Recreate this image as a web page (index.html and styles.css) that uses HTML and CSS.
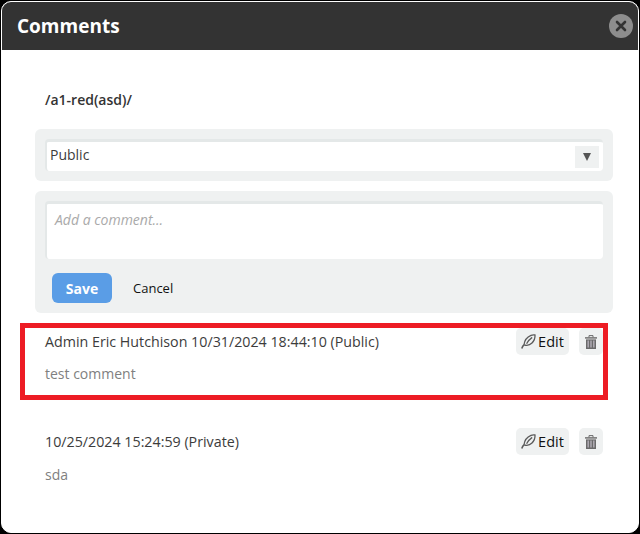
FILE: index.html
```html
<!DOCTYPE html>
<html lang="en">
<head>
<meta charset="utf-8">
<title>Comments</title>
<link rel="stylesheet" href="styles.css">
</head>
<body>
<div class="dialog">
  <header class="dialog-head">
    <h1 class="dialog-title">Comments</h1>
    <button class="close" aria-label="Close">
      <svg width="12" height="12" viewBox="0 0 12 12"><path d="M2 2l8 8M10 2l-8 8" stroke="#333" stroke-width="2.6" stroke-linecap="round" fill="none"/></svg>
    </button>
  </header>
  <main class="dialog-body">
    <div class="path">/a1-red(asd)/</div>
    <div class="panel">
      <div class="field select">
        <span class="select-value">Public</span>
        <span class="select-arrow"><svg width="8" height="8" viewBox="0 0 8 8"><path d="M0 0h8L4 8z" fill="#555"/></svg></span>
      </div>
    </div>
    <div class="panel">
      <div class="field textarea">Add a comment...</div>
      <div class="actions">
        <button class="save">Save</button>
        <button class="cancel">Cancel</button>
      </div>
    </div>
    <section class="comment comment-first">
      <div class="comment-head">
        <span class="meta">Admin Eric Hutchison 10/31/2024 18:44:10 (Public)</span>
        <button class="tool edit">
          <svg width="15" height="15" viewBox="0 0 15 15"><path d="M.8 14.4C1.4 12.6 2 11.6 3 10.8" stroke="#5c5c5c" stroke-width="1.6" fill="none"/><path d="M3 10.8C3.4 7 6.2 3 10 1.4c1.2-.5 2.4-.6 4-.4.2 3-1 6-3 8-2.200 2.200-5 2.800-8 1.800z" stroke="#5c5c5c" stroke-width="1.300" fill="none"/><path d="M5.600 9.800C6.800 7.400 8.600 5.200 11.200 3.400" stroke="#5c5c5c" stroke-width="1.300" fill="none"/></svg>
          <span>Edit</span>
        </button>
        <button class="tool trash" aria-label="Delete">
          <svg width="12" height="14" viewBox="0 0 12 14"><path d="M0 2.200h12v1.400H0z" fill="#6a6a6a"/><path d="M4 2.200V.6h4v1.600" stroke="#6a6a6a" stroke-width="1" fill="none"/><path d="M1 4.400h10V14H1z" fill="#6a6a6a"/><path d="M3.200 5.600v7M6 5.600v7M8.800 5.600v7" stroke="#b4afb8" stroke-width="1.400"/></svg>
        </button>
      </div>
      <p class="comment-text">test comment</p>
    </section>
    <section class="comment">
      <div class="comment-head">
        <span class="meta">10/25/2024 15:24:59 (Private)</span>
        <button class="tool edit">
          <svg width="15" height="15" viewBox="0 0 15 15"><path d="M.8 14.4C1.4 12.6 2 11.6 3 10.8" stroke="#5c5c5c" stroke-width="1.6" fill="none"/><path d="M3 10.8C3.4 7 6.2 3 10 1.4c1.2-.5 2.4-.6 4-.4.2 3-1 6-3 8-2.200 2.200-5 2.800-8 1.800z" stroke="#5c5c5c" stroke-width="1.300" fill="none"/><path d="M5.600 9.800C6.800 7.400 8.600 5.200 11.200 3.400" stroke="#5c5c5c" stroke-width="1.300" fill="none"/></svg>
          <span>Edit</span>
        </button>
        <button class="tool trash" aria-label="Delete">
          <svg width="12" height="14" viewBox="0 0 12 14"><path d="M0 2.200h12v1.400H0z" fill="#6a6a6a"/><path d="M4 2.200V.6h4v1.600" stroke="#6a6a6a" stroke-width="1" fill="none"/><path d="M1 4.400h10V14H1z" fill="#6a6a6a"/><path d="M3.200 5.600v7M6 5.600v7M8.800 5.600v7" stroke="#b4afb8" stroke-width="1.400"/></svg>
        </button>
      </div>
      <p class="comment-text">sda</p>
    </section>
  </main>
</div>
<div class="highlight"></div>
</body>
</html>
```
FILE: styles.css
```css
* { box-sizing: border-box; }
html, body { margin: 0; height: 534px; overflow: hidden; }
body {
  background: #000;
  font-family: "Open Sans", sans-serif;
  padding: 1px;
  position: relative;
}
button { font-family: inherit; border: 0; padding: 0; cursor: pointer; }
.dialog {
  width: 638px;
  height: 532px;
  background: #fff;
  border: 1px solid #fff;
  border-radius: 10px;
  overflow: hidden;
}
.dialog-head {
  height: 48px;
  background: #333;
  display: flex;
  align-items: center;
  justify-content: space-between;
  padding: 0 5px 1px 15px;
}
.dialog-title { margin: 0; color: #fff; font-size: 19px; font-weight: 700; line-height: 46px; }
.close {
  width: 24px; height: 24px; border-radius: 50%;
  background: #8d8d8d;
  display: flex; align-items: center; justify-content: center;
}
.dialog-body { padding: 40px 25px 0 33px; }
.path { font-size: 14px; font-weight: 600; color: #333; line-height: 20px; padding-left: 10px; margin-bottom: 19px; }
.panel { background: #eff1f1; border-radius: 6px; padding: 10px; margin-bottom: 10px; }
.field {
  background: #fff;
  border-top: 3px solid #e4e8e8;
  border-left: 2px solid #e4e8e8;
  border-radius: 4px;
}
.select { height: 32px; display: flex; align-items: center; justify-content: space-between; padding: 0 4px 0 3px; }
.select-value { font-size: 14px; color: #3c3c3c; margin-bottom: 5px; }
.select-arrow {
  width: 24px; height: 22px; background: #eff1f1;
  display: flex; align-items: center; justify-content: center;
}
.textarea { height: 58px; font-size: 14px; font-style: italic; color: #aaa; padding: 6px 8px; line-height: 20px; }
.actions { display: flex; align-items: center; margin-top: 14px; padding-left: 7px; }
.save {
  width: 60px; height: 30px; border-radius: 6px;
  background: #5a9de6; color: #fff; font-size: 14px; font-weight: 700;
}
.cancel { background: none; color: #111; font-size: 13px; font-weight: 500; margin-left: 21px; }
.comment { padding: 0 10px; }
.comment-first { margin-top: 15px; }
.comment + .comment { margin-top: 45px; }
.comment-head { display: flex; align-items: center; height: 27px; }
.meta { flex: 1; font-size: 14.25px; color: #3c3c3c; }
.tool {
  height: 27px; background: #eff1f1; border-radius: 5px;
  display: flex; align-items: center; justify-content: center;
}
.edit { width: 53px; gap: 2px; font-size: 14.5px; color: #111; margin-right: 10px; }
.trash { width: 24px; }
.comment-text { margin: 10px 0 0; font-size: 14px; line-height: 18px; color: #808080; }
.comment + .comment .comment-text { margin-top: 11px; }
.highlight {
  position: absolute;
  left: 20px; top: 323px;
  width: 588px; height: 77px;
  border: 5px solid #ed1c24;
}
```
